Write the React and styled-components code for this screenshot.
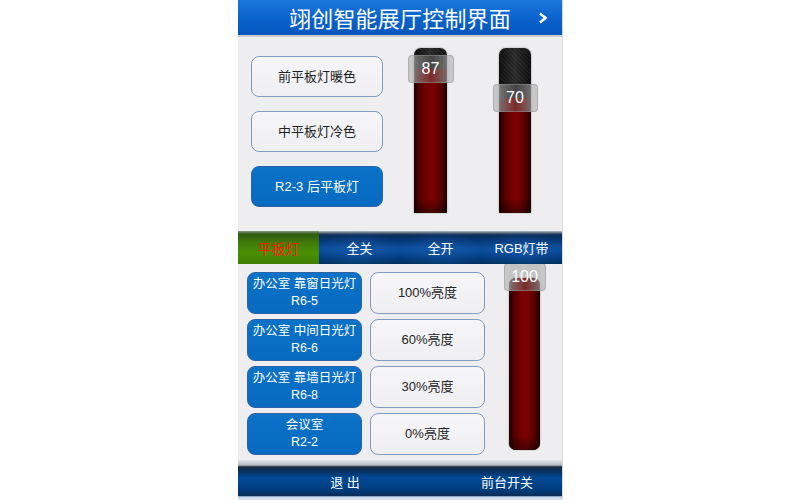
import React from "react";
import styled, { createGlobalStyle } from "styled-components";

const Global = createGlobalStyle`
  html, body { margin: 0; padding: 0; background: #ffffff; }
  body { font-family: "Liberation Sans", "Noto Sans CJK SC", sans-serif; }
  * { box-sizing: border-box; }
`;

const Page = styled.div`
  width: 800px;
  height: 500px;
  display: flex;
  justify-content: center;
`;

const Panel = styled.div`
  width: 325px;
  height: 500px;
  margin-left: 1px;
  background: #eeeef0;
  display: flex;
  flex-direction: column;
  overflow: hidden;
  border-right: 1px solid #d9dadc;
`;

const Header = styled.div`
  height: 37px;
  flex: none;
  display: grid;
  grid-template-columns: 1fr auto 1fr;
  align-items: center;
  background: linear-gradient(180deg, #1b78dc 0%, #0b63cc 50%, #0456bd 100%);
  border-bottom: 2px solid #c9ccd1;
`;

const Title = styled.div`
  grid-column: 2;
  color: #fff;
  font-family: "Noto Sans CJK SC", sans-serif;
  font-size: 22px;
  line-height: 35px;
  letter-spacing: 0.2px;
`;

const Chevron = styled.svg`
  grid-column: 3;
  justify-self: end;
  margin-right: 14px;
  width: 10px;
  height: 12px;
`;

const TopSection = styled.div`
  height: 194px;
  flex: none;
  display: flex;
  align-items: flex-start;
  padding-left: 13px;
`;

const ButtonColumn = styled.div`
  display: flex;
  flex-direction: column;
  gap: ${(p) => p.$gap}px;
  padding-top: ${(p) => p.$top}px;
`;

const Button = styled.div`
  width: ${(p) => p.$w}px;
  height: ${(p) => p.$h}px;
  border-radius: 8px;
  display: flex;
  flex-direction: column;
  align-items: center;
  justify-content: center;
  gap: 2px;
  font-size: 13px;
  line-height: 16px;
  text-align: center;
  color: ${(p) => (p.$blue ? "#ffffff" : "#222222")};
  background: ${(p) =>
    p.$blue
      ? "linear-gradient(180deg, #0b72c8 0%, #066ac0 100%)"
      : "linear-gradient(180deg, #f6f6f8 0%, #efeff2 100%)"};
  border: ${(p) => (p.$blue ? "1px solid #2b64a6" : "1.5px solid #7f9dc3")};
`;

const Line = styled.div`
  height: 15px;
  line-height: 15px;
  font-size: 12.5px;
  white-space: nowrap;
`;

const SliderWrap = styled.div`
  position: relative;
  width: ${(p) => p.$w}px;
  height: ${(p) => p.$h}px;
  margin-left: ${(p) => p.$ml}px;
  margin-top: ${(p) => p.$mt}px;
  flex: none;
`;

const Track = styled.div`
  position: absolute;
  inset: 0;
  border-radius: ${(p) => (p.$roundBottom ? "7px" : "7px 7px 1px 1px")};
  background:
    repeating-linear-gradient(45deg, rgba(255,255,255,0.04) 0 1px, transparent 1px 3px),
    linear-gradient(90deg, #0e0e0e 0%, #2a2a2a 50%, #0e0e0e 100%);
  box-shadow: 0 0 2px rgba(0, 0, 0, 0.45), 0 1px 2px rgba(255,255,255,0.8);
  overflow: hidden;
`;

const Fill = styled.div`
  position: absolute;
  left: 0;
  right: 0;
  bottom: 0;
  background: linear-gradient(90deg, #1e0000 0%, #560000 18%, #760000 40%, #7a0000 60%, #560000 82%, #1e0000 100%);
`;

const FillShade = styled.div`
  position: absolute;
  left: 0;
  right: 0;
  bottom: 0;
  height: 14px;
  background: linear-gradient(180deg, transparent, rgba(0,0,0,0.45));
`;

const Thumb = styled.div`
  position: absolute;
  left: ${(p) => p.$left}px;
  width: ${(p) => p.$tw}px;
  height: 28px;
  border-radius: 4px;
  background: linear-gradient(90deg, rgba(195,195,195,0.85) 0%, rgba(165,165,165,0.6) 18%, rgba(120,120,120,0.35) 50%, rgba(165,165,165,0.6) 82%, rgba(195,195,195,0.85) 100%);
  border: 1px solid rgba(150, 150, 150, 0.5);
  display: flex;
  align-items: center;
  justify-content: center;
  color: #ffffff;
  font-family: "Liberation Sans", sans-serif;
  font-size: 16px;
`;

function Slider({ value, w, h, ml, mt, thumbW, roundBottom, thumbTop }) {
  const fillH = (h * value) / 100;
  const tTop = thumbTop !== undefined ? thumbTop : h - fillH - 14;
  return (
    <SliderWrap $w={w} $h={h} $ml={ml} $mt={mt}>
      <Track $roundBottom={roundBottom}>
        <Fill style={{ height: fillH }} />
        <FillShade />
      </Track>
      <Thumb $left={-(thumbW - w) / 2} $tw={thumbW} style={{ top: tTop }}>
        {value}
      </Thumb>
    </SliderWrap>
  );
}

const TabBar = styled.div`
  height: 33px;
  flex: none;
  display: grid;
  grid-template-columns: repeat(4, 1fr);
  background:
    linear-gradient(180deg, #b9bec6 0px, #56657a 2px, transparent 4px),
    linear-gradient(180deg, #0a2546 0%, #053a78 30%, #0a4f9e 55%, #033d80 80%, #04305f 100%);
  position: relative;
  z-index: 2;
`;

const Tab = styled.div`
  display: flex;
  align-items: center;
  justify-content: center;
  font-size: ${(p) => (p.$active ? 14 : 13)}px;
  color: ${(p) => (p.$active ? "#ff1a00" : "#ffffff")};
  background: ${(p) =>
    p.$active
      ? "linear-gradient(180deg, #8c9a84 0px, #2f5a12 3px, #3f7a0a 35%, #4a8f06 65%, #3f7f04 100%)"
      : "radial-gradient(ellipse 50% 60% at 50% 60%, rgba(40,110,200,0.35), transparent)"};
`;

const LowerSection = styled.div`
  height: 196px;
  flex: none;
  display: flex;
  align-items: flex-start;
  padding-left: 9px;
  gap: 8px;
`;

const Footer = styled.div`
  flex: 1;
  display: grid;
  grid-template-columns: 214px 1fr;
  align-items: center;
  padding-top: 6px;
  background:
    linear-gradient(180deg, #e4e5e7 0px, #b7bbc1 5px, #17253a 7px, #06305f 11px, #004a96 45%, #013c7c 75%, #0b2d58 89%, #c2d3e6 92%, #dfe8f2 100%);
`;

const FooterItem = styled.div`
  text-align: center;
  color: #ffffff;
  font-size: 13px;
  padding-bottom: 4px;
  white-space: pre;
`;

export default function App() {
  return (
    <>
      <Global />
      <Page>
        <Panel>
          <Header>
            <Title>翊创智能展厅控制界面</Title>
            <Chevron viewBox="0 0 10 12">
              <polyline points="2,1.5 7.5,6 2,10.5" fill="none" stroke="#ffffff" strokeWidth="2.6" strokeLinejoin="miter" />
            </Chevron>
          </Header>
          <TopSection>
            <ButtonColumn $gap={14} $top={19}>
              <Button $w={132} $h={41}>前平板灯暖色</Button>
              <Button $w={132} $h={41}>中平板灯冷色</Button>
              <Button $w={132} $h={41} $blue>R2-3 后平板灯</Button>
            </ButtonColumn>
            <Slider value={87} w={33} h={165} ml={31} mt={11} thumbW={46} />
            <Slider value={70} w={32} h={165} ml={52} mt={11} thumbW={45} />
          </TopSection>
          <TabBar>
            <Tab $active>平板灯</Tab>
            <Tab>全关</Tab>
            <Tab>全开</Tab>
            <Tab>RGB灯带</Tab>
          </TabBar>
          <LowerSection>
            <ButtonColumn $gap={5} $top={8}>
              <Button $w={115} $h={42} $blue>
                <Line>办公室 靠窗日光灯</Line>
                <Line>R6-5</Line>
              </Button>
              <Button $w={115} $h={42} $blue>
                <Line>办公室 中间日光灯</Line>
                <Line>R6-6</Line>
              </Button>
              <Button $w={115} $h={42} $blue>
                <Line>办公室 靠墙日光灯</Line>
                <Line>R6-8</Line>
              </Button>
              <Button $w={115} $h={42} $blue>
                <Line>会议室</Line>
                <Line>R2-2</Line>
              </Button>
            </ButtonColumn>
            <ButtonColumn $gap={5} $top={8}>
              <Button $w={115} $h={42}>100%亮度</Button>
              <Button $w={115} $h={42}>60%亮度</Button>
              <Button $w={115} $h={42}>30%亮度</Button>
              <Button $w={115} $h={42}>0%亮度</Button>
            </ButtonColumn>
            <Slider value={100} w={31} h={172} ml={16} mt={14} thumbW={42} roundBottom thumbTop={-15} />
          </LowerSection>
          <Footer>
            <FooterItem>退 出</FooterItem>
            <FooterItem>前台开关</FooterItem>
          </Footer>
        </Panel>
      </Page>
    </>
  );
}
